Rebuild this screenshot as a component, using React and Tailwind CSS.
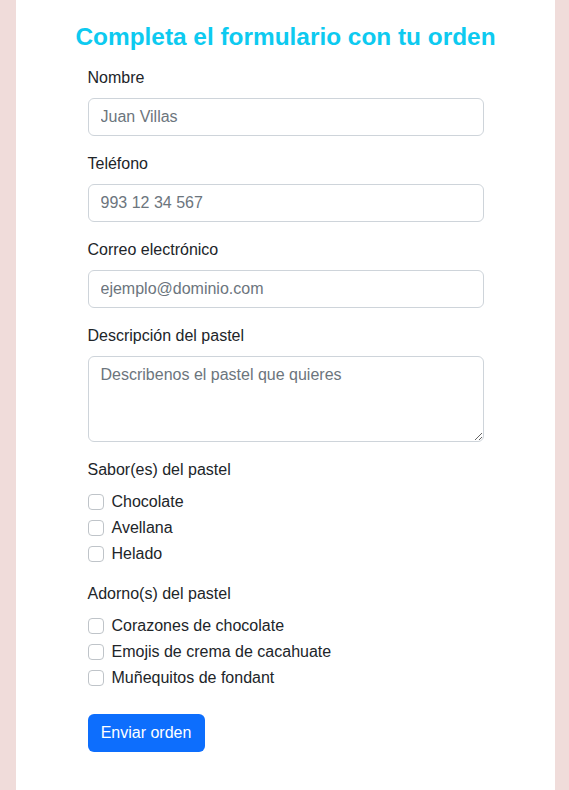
const sabores = ["Chocolate", "Avellana", "Helado"];
const adornos = ["Corazones de chocolate", "Emojis de crema de cacahuate", "Muñequitos de fondant"];

function Field({ label, placeholder, type = "text" }) {
  return (
    <div className="mb-4">
      <label className="block mb-2 leading-6 text-[16px]">{label}</label>
      <input
        type={type}
        placeholder={placeholder}
        className="block w-full h-[38px] px-3 border border-[#ced4da] rounded-[6px] bg-white text-[16px] placeholder:text-[#6c757d] outline-none"
      />
    </div>
  );
}

function CheckGroup({ title, items, className = "" }) {
  return (
    <div className={className}>
      <p className="mb-2 leading-6">{title}</p>
      <div className="flex flex-col gap-[2px]">
        {items.map((it) => (
          <label key={it} className="flex items-center h-6 gap-2">
            <input
              type="checkbox"
              className="appearance-none w-4 h-4 border border-[#bfc4c9] rounded-[4px] bg-white"
            />
            <span>{it}</span>
          </label>
        ))}
      </div>
    </div>
  );
}

export default function App() {
  return (
    <div
      className="min-h-screen bg-[#f0dcda] pl-4 text-[#212529]"
      style={{ fontFamily: '"Liberation Sans", Arial, sans-serif' }}
    >
      <div className="w-[539px] min-h-screen bg-white pt-[22px] pb-10">
        <h2 className="text-center text-[24.4px] leading-[29px] font-bold text-[#0dcaf0] mb-[15px]">
          Completa el formulario con tu orden
        </h2>
        <form className="w-[396px] mx-auto" onSubmit={(e) => e.preventDefault()}>
          <Field label="Nombre" placeholder="Juan Villas" />
          <Field label="Teléfono" placeholder="993 12 34 567" type="tel" />
          <Field label="Correo electrónico" placeholder="ejemplo@dominio.com" type="email" />
          <div className="mb-4">
            <label className="block mb-2 leading-6">Descripción del pastel</label>
            <textarea
              rows={3}
              placeholder="Describenos el pastel que quieres"
              className="block w-full h-[86px] px-3 py-[6px] leading-6 border border-[#ced4da] rounded-[6px] text-[16px] placeholder:text-[#6c757d] outline-none resize-y"
            />
          </div>
          <CheckGroup title="Sabor(es) del pastel" items={sabores} className="mb-4" />
          <CheckGroup title="Adorno(s) del pastel" items={adornos} className="mb-6" />
          <button className="h-[38px] w-[117px] rounded-[6px] bg-[#0d6efd] text-white text-[16px]">
            Enviar orden
          </button>
        </form>
      </div>
    </div>
  );
}
